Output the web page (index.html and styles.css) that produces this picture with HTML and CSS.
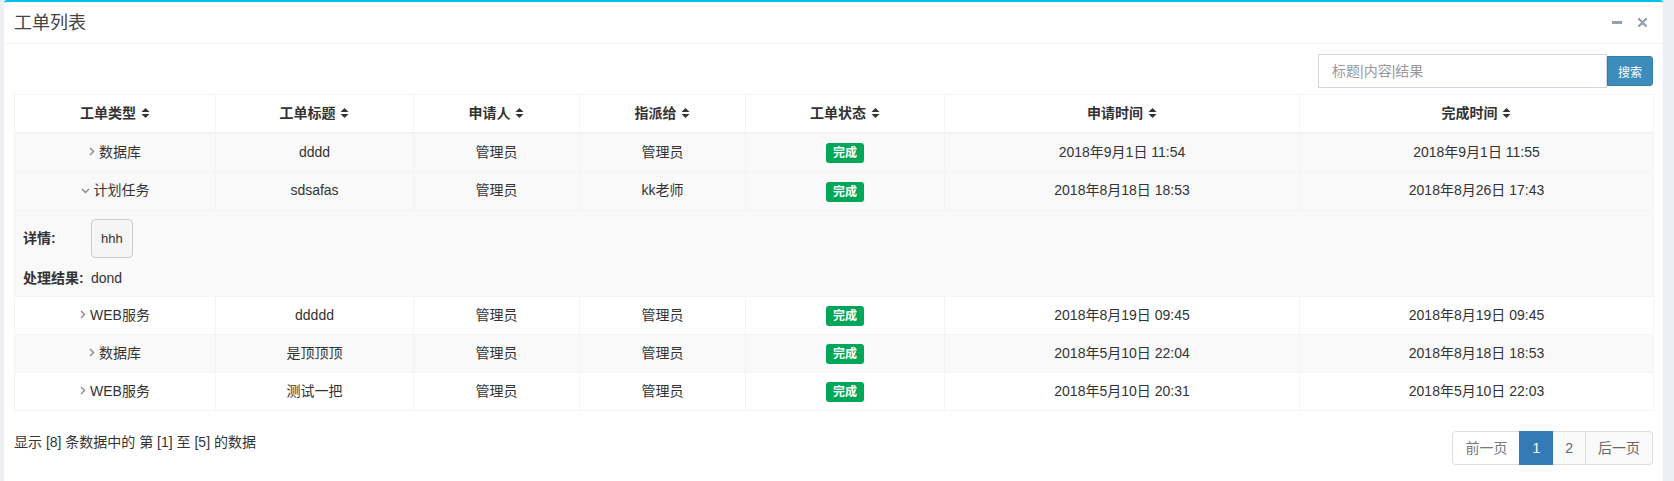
FILE: index.html
```html
<!DOCTYPE html>
<html lang="zh">
<head>
<meta charset="utf-8">
<title>工单列表</title>
<link rel="stylesheet" href="styles.css">
</head>
<body>
<div class="box">
  <div class="box-header">
    <h3 class="box-title">工单列表</h3>
    <div class="box-tools">
      <span class="tool tool-min"><svg width="10" height="3" viewBox="0 0 10 3"><rect x="0" y="0" width="10" height="3" fill="#97a0b3"/></svg></span>
      <span class="tool tool-close"><svg width="9" height="9" viewBox="0 0 9 9"><path d="M1 1 L8 8 M8 1 L1 8" stroke="#97a0b3" stroke-width="2.4" stroke-linecap="round"/></svg></span>
    </div>
  </div>
  <div class="box-body">
    <div class="search-row">
      <div class="search-group">
        <input class="search-input" type="text" placeholder="标题|内容|结果">
        <button class="search-btn" type="button">搜索</button>
      </div>
    </div>
    <table class="grid">
      <colgroup>
        <col class="c1"><col class="c2"><col class="c3"><col class="c4"><col class="c5"><col class="c6"><col class="c7">
      </colgroup>
      <thead>
        <tr>
          <th>工单类型 <svg class="sort" width="9" height="12" viewBox="0 0 9 12"><path d="M0.5 5 L4.5 1 L8.5 5 Z M0.5 7 L4.5 11 L8.5 7 Z" fill="#333"/></svg></th>
          <th>工单标题 <svg class="sort" width="9" height="12" viewBox="0 0 9 12"><path d="M0.5 5 L4.5 1 L8.5 5 Z M0.5 7 L4.5 11 L8.5 7 Z" fill="#333"/></svg></th>
          <th>申请人 <svg class="sort" width="9" height="12" viewBox="0 0 9 12"><path d="M0.5 5 L4.5 1 L8.5 5 Z M0.5 7 L4.5 11 L8.5 7 Z" fill="#333"/></svg></th>
          <th>指派给 <svg class="sort" width="9" height="12" viewBox="0 0 9 12"><path d="M0.5 5 L4.5 1 L8.5 5 Z M0.5 7 L4.5 11 L8.5 7 Z" fill="#333"/></svg></th>
          <th>工单状态 <svg class="sort" width="9" height="12" viewBox="0 0 9 12"><path d="M0.5 5 L4.5 1 L8.5 5 Z M0.5 7 L4.5 11 L8.5 7 Z" fill="#333"/></svg></th>
          <th>申请时间 <svg class="sort" width="9" height="12" viewBox="0 0 9 12"><path d="M0.5 5 L4.5 1 L8.5 5 Z M0.5 7 L4.5 11 L8.5 7 Z" fill="#333"/></svg></th>
          <th>完成时间 <svg class="sort" width="9" height="12" viewBox="0 0 9 12"><path d="M0.5 5 L4.5 1 L8.5 5 Z M0.5 7 L4.5 11 L8.5 7 Z" fill="#333"/></svg></th>
        </tr>
      </thead>
      <tbody>
        <tr class="odd">
          <td><svg class="chev" width="6" height="9" viewBox="0 0 6 9"><path d="M1 1 L4.5 4.5 L1 8" fill="none" stroke="#888" stroke-width="1.4"/></svg>数据库</td>
          <td>dddd</td><td>管理员</td><td>管理员</td>
          <td><span class="label">完成</span></td>
          <td>2018年9月1日 11:54</td><td>2018年9月1日 11:55</td>
        </tr>
        <tr class="odd shown">
          <td><svg class="chev" width="9" height="6" viewBox="0 0 9 6"><path d="M1 1 L4.5 4.5 L8 1" fill="none" stroke="#888" stroke-width="1.4"/></svg>计划任务</td>
          <td>sdsafas</td><td>管理员</td><td>kk老师</td>
          <td><span class="label">完成</span></td>
          <td>2018年8月18日 18:53</td><td>2018年8月26日 17:43</td>
        </tr>
        <tr class="detail">
          <td colspan="7">
            <div class="detail-grid">
              <b class="dlabel">详情:</b>
              <div><pre class="well">hhh</pre></div>
              <b class="dlabel">处理结果:</b>
              <div>dond</div>
            </div>
          </td>
        </tr>
        <tr>
          <td><svg class="chev" width="6" height="9" viewBox="0 0 6 9"><path d="M1 1 L4.5 4.5 L1 8" fill="none" stroke="#888" stroke-width="1.4"/></svg>WEB服务</td>
          <td>ddddd</td><td>管理员</td><td>管理员</td>
          <td><span class="label">完成</span></td>
          <td>2018年8月19日 09:45</td><td>2018年8月19日 09:45</td>
        </tr>
        <tr class="odd">
          <td><svg class="chev" width="6" height="9" viewBox="0 0 6 9"><path d="M1 1 L4.5 4.5 L1 8" fill="none" stroke="#888" stroke-width="1.4"/></svg>数据库</td>
          <td>是顶顶顶</td><td>管理员</td><td>管理员</td>
          <td><span class="label">完成</span></td>
          <td>2018年5月10日 22:04</td><td>2018年8月18日 18:53</td>
        </tr>
        <tr>
          <td><svg class="chev" width="6" height="9" viewBox="0 0 6 9"><path d="M1 1 L4.5 4.5 L1 8" fill="none" stroke="#888" stroke-width="1.4"/></svg>WEB服务</td>
          <td>测试一把</td><td>管理员</td><td>管理员</td>
          <td><span class="label">完成</span></td>
          <td>2018年5月10日 20:31</td><td>2018年5月10日 22:03</td>
        </tr>
      </tbody>
    </table>
    <div class="footer-row">
      <div class="info">显示 [8] 条数据中的 第 [1] 至 [5] 的数据</div>
      <ul class="pagination">
        <li class="page disabled">前一页</li>
        <li class="page active">1</li>
        <li class="page">2</li>
        <li class="page">后一页</li>
      </ul>
    </div>
  </div>
</div>
</body>
</html>
```
FILE: styles.css
```css
html, body {
  margin: 0;
  padding: 0;
}
body {
  background: #ecf0f5;
  font-family: "Liberation Sans", "Noto Sans CJK SC", sans-serif;
  font-size: 14px;
  line-height: 20px;
  color: #333;
  padding: 0 11px 0 4px;
  height: 481px;
  overflow: hidden;
}
.box {
  background: #fff;
  border-top: 2px solid #00c0ef;
  border-radius: 3px 3px 0 0;
  min-height: 479px;
}
.box-header {
  height: 41px;
  padding: 0 10px;
  display: flex;
  align-items: center;
  justify-content: space-between;
  border-bottom: 1px solid #f4f4f4;
}
.box-title {
  margin: 0;
  font-size: 18px;
  line-height: 18px;
  font-weight: normal;
  color: #444;
}
.box-tools {
  display: flex;
  align-items: center;
  gap: 16px;
  padding-right: 6px;
}
.tool {
  display: flex;
  align-items: center;
}
.box-body {
  padding: 10px;
}
.search-row {
  display: flex;
  justify-content: flex-end;
  margin-bottom: 6px;
}
.search-group {
  display: flex;
  align-items: center;
}
.search-input {
  width: 289px;
  height: 34px;
  box-sizing: border-box;
  border: 1px solid #d2d6de;
  padding: 6px 13px;
  font-family: inherit;
  font-size: 14px;
  color: #555;
  outline: none;
  border-radius: 0;
}
.search-input::placeholder {
  color: #999;
}
.search-btn {
  height: 30px;
  width: 46px;
  box-sizing: border-box;
  background: #3c8dbc;
  border: 1px solid #367fa9;
  color: #fff;
  font-family: inherit;
  font-size: 12px;
  padding: 0;
  border-radius: 0 3px 3px 0;
}
.grid {
  width: 1639px;
  table-layout: fixed;
  border-collapse: collapse;
  border: 1px solid #f4f4f4;
}
.c1 { width: 201px; }
.c2 { width: 198px; }
.c3 { width: 166px; }
.c4 { width: 166px; }
.c5 { width: 199px; }
.c6 { width: 355px; }
.c7 { width: 354px; }
.grid th {
  padding: 8px;
  line-height: 21px;
  font-weight: bold;
  text-align: center;
  border: 1px solid #f4f4f4;
  border-bottom-width: 2px;
  white-space: nowrap;
}
.sort {
  vertical-align: -1px;
  margin-left: 1px;
}
.grid td {
  padding: 8px;
  line-height: 21px;
  text-align: center;
  border: 1px solid #f4f4f4;
  white-space: nowrap;
}
.grid tr.odd td {
  background: #f9f9f9;
}
.chev {
  margin-right: 4px;
  vertical-align: 1px;
}
.label {
  display: inline-block;
  background: #00a65a;
  color: #fff;
  font-weight: bold;
  font-size: 12px;
  line-height: 14px;
  padding: 3px 7px;
  border-radius: 3px;
  vertical-align: middle;
}
.grid tr.detail td {
  background: #f9f9f9;
  text-align: left;
  padding: 8px 8px 8px 8px;
  line-height: 20px;
}
.detail-grid {
  display: grid;
  grid-template-columns: 68px auto;
  align-items: center;
  row-gap: 10px;
}
.dlabel {
  font-weight: bold;
}
.well {
  display: inline-block;
  margin: 0;
  padding: 9px 9px;
  font-family: "Liberation Sans", sans-serif;
  font-size: 13px;
  line-height: 19px;
  color: #333;
  background: #f5f5f5;
  border: 1px solid #ccc;
  border-radius: 4px;
}
.footer-row {
  display: flex;
  justify-content: space-between;
  align-items: flex-start;
  margin-top: 20px;
}
.info {
  padding-top: 1px;
}
.pagination {
  display: flex;
  margin: 0;
  padding: 0;
  list-style: none;
}
.page {
  height: 34px;
  box-sizing: border-box;
  padding: 6px 12px;
  line-height: 20px;
  border: 1px solid #ddd;
  margin-left: -1px;
  background: #fafafa;
  color: #666;
}
.page:first-child {
  margin-left: 0;
  border-radius: 4px 0 0 4px;
}
.page:last-child {
  border-radius: 0 4px 4px 0;
}
.page.disabled {
  background: #fff;
  color: #777;
}
.page.active {
  background: #337ab7;
  border-color: #337ab7;
  color: #fff;
  position: relative;
  z-index: 1;
}
```
